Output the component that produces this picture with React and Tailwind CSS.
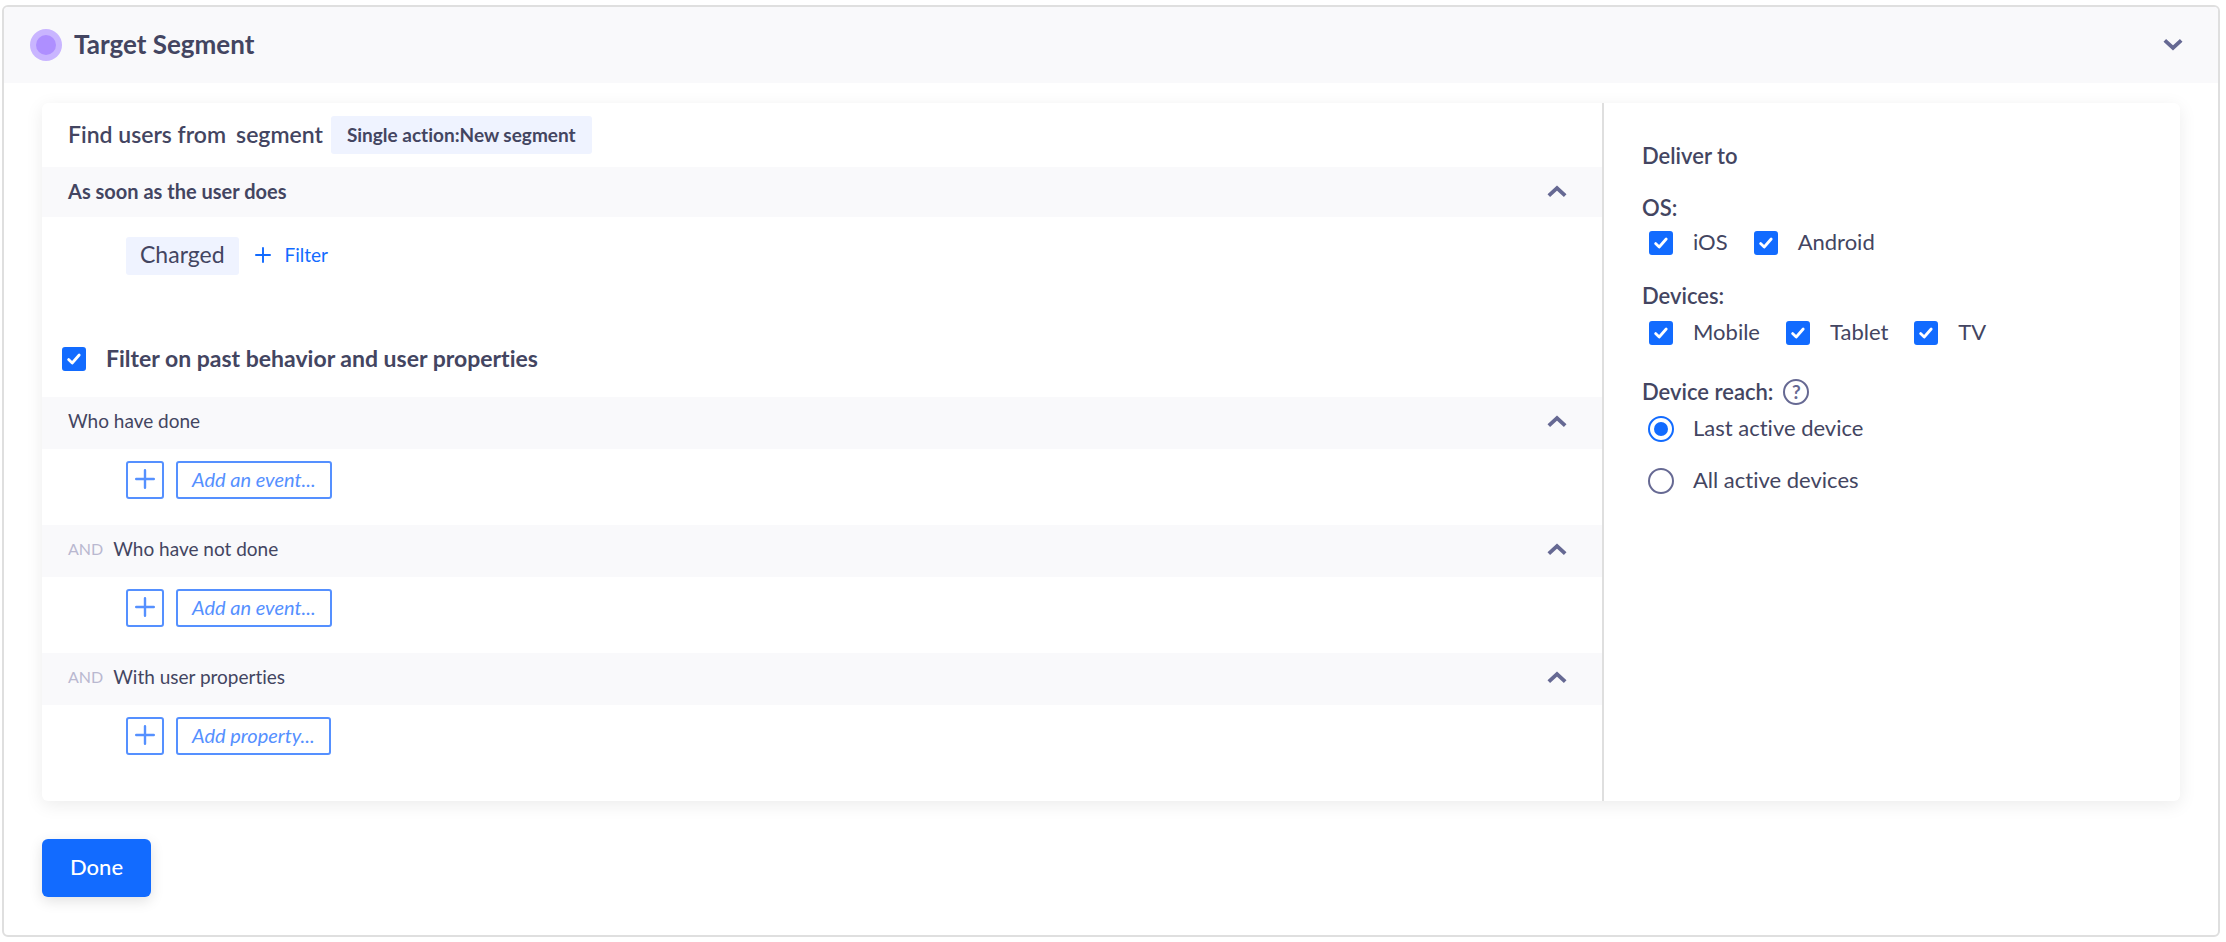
import React, { useState } from "react";

const Chevron = ({ up }) => (
  <svg
    viewBox="0 0 20 12"
    className={`w-5 h-3 text-[#666993] ${up ? "rotate-180" : ""}`}
    fill="none"
    stroke="currentColor"
    strokeWidth="3.8"
    strokeLinejoin="miter"
  >
    <path d="M1.8 1.4 L10 9 L18.2 1.4" />
  </svg>
);

const Plus = ({ className }) => (
  <svg viewBox="0 0 20 20" className={className} fill="none" stroke="currentColor" strokeWidth="2.4" strokeLinecap="round">
    <path d="M10 1.2V18.8M1.2 10H18.8" />
  </svg>
);

const Checkbox = ({ label, className = "", textClass = "" }) => (
  <label className={`flex items-center h-[26px] cursor-pointer ${className}`}>
    <span className="relative flex w-6 h-6">
      <input
        type="checkbox"
        defaultChecked
        className="peer appearance-none w-6 h-6 rounded-[3px] border-2 border-[#666993] checked:border-[#126bff] checked:bg-[#126bff]"
      />
      <svg
        viewBox="0 0 24 24"
        className="absolute inset-0 w-6 h-6 text-white pointer-events-none opacity-0 peer-checked:opacity-100"
        fill="none"
        stroke="currentColor"
        strokeWidth="2.8"
        strokeLinecap="round"
        strokeLinejoin="round"
      >
        <path d="M6.6 12.6L10.2 16L17.2 8" />
      </svg>
    </span>
    <span className={`ml-5 pb-[2px] ${textClass}`}>{label}</span>
  </label>
);

const Radio = ({ label, value, selected, onSelect }) => (
  <label className="flex items-center h-[26px] cursor-pointer">
    <span className="relative flex w-[26px] h-[26px]">
      <input
        type="radio"
        name="reach"
        value={value}
        checked={selected === value}
        onChange={() => onSelect(value)}
        className="peer appearance-none w-[26px] h-[26px] rounded-full border-2 border-[#666993] checked:border-[#126bff]"
      />
      <span className="absolute inset-0 m-auto w-[14px] h-[14px] rounded-full bg-[#126bff] opacity-0 peer-checked:opacity-100" />
    </span>
    <span className="ml-[19px] pb-[2px]">{label}</span>
  </label>
);

const Section = ({ title, and, action }) => {
  const [open, setOpen] = useState(true);

  return (
    <section>
      <div className="h-[52px] pl-[26px] pr-[35px] pb-1 flex items-center bg-[#f9f9fb] text-[19px]">
        {and && <span className="mr-[10px] text-[16px] text-[#b9b8d0]">AND</span>}
        <h3>{title}</h3>
        <button className="ml-auto" aria-label={title} onClick={() => setOpen(!open)}>
          <Chevron up={open} />
        </button>
      </div>
      {open && (
        <div className="flex gap-3 pt-3 pb-[26px] pl-[84px] text-[#5590ff]">
          <button className="w-[38px] h-[38px] pb-[2px] flex items-center justify-center rounded-[3px] border-2" aria-label="Add">
            <Plus className="w-5 h-5" />
          </button>
          <button className="h-[38px] px-[14px] pb-[2px] rounded-[3px] border-2 text-[20px] italic">{action}</button>
        </div>
      )}
    </section>
  );
};

export default function App() {
  const [reach, setReach] = useState("last");

  return (
    <div className="pl-[2px] pr-[6px] py-[5px] bg-white font-['Lato','Open_Sans',sans-serif] [font-variant-ligatures:none] text-[22px] leading-[26px] text-[#434561]">
      <div className="rounded-md border-2 border-[#dfdfdf] overflow-hidden">
        <header className="h-[76px] pl-[26px] pr-[35px] flex items-center bg-[#f9f9fb]">
          <span className="w-8 h-8 flex items-center justify-center rounded-full bg-[#c9b5ff]">
            <span className="w-5 h-5 rounded-full bg-[#ae8fff]" />
          </span>
          <h1 className="ml-3 pb-[2px] text-[26px] font-bold">Target Segment</h1>
          <button className="ml-auto" aria-label="Collapse">
            <Chevron />
          </button>
        </header>

        <main className="px-[38px] pt-5 pb-[38px]">
          <div className="flex rounded-md overflow-hidden bg-white shadow-[0_4px_18px_rgba(0,0,0,0.08)]">
            <div className="flex-1 pb-5">
              <div className="h-16 px-[26px] flex items-center font-semibold">
                <span className="pb-[2px] text-[23px]">Find users from</span>
                <span className="ml-[10px] pb-[2px] text-[23px]">segment</span>
                <span className="ml-2 h-[38px] px-4 flex items-center rounded-[3px] bg-[#eff3ff] text-[19px] font-bold">
                  Single action:New segment
                </span>
              </div>
              <div className="h-[50px] pl-[26px] pr-[35px] pb-[2px] flex items-center bg-[#f9f9fb]">
                <h2 className="text-[20px] font-bold">As soon as the user does</h2>
                <button className="ml-auto" aria-label="Toggle trigger">
                  <Chevron up />
                </button>
              </div>
              <div className="pl-[84px] pt-5 flex items-center">
                <span className="h-[38px] px-[14px] pb-1 flex items-center rounded-[3px] bg-[#eff3ff] text-[23px]">
                  Charged
                </span>
                <button className="ml-4 pb-[2px] flex items-center text-[19px] text-[#126bff]">
                  <Plus className="w-4 h-4" />
                  <span className="ml-[14px]">Filter</span>
                </button>
              </div>
              <Checkbox
                label="Filter on past behavior and user properties"
                className="mt-[71px] mb-[25px] ml-5"
                textClass="text-[23px] font-bold"
              />
              <Section title="Who have done" action="Add an event..." />
              <Section title="Who have not done" action="Add an event..." and />
              <Section title="With user properties" action="Add property..." and />
            </div>

            <aside className="w-[578px] pl-[38px] pt-10 border-l-2 border-[#dfdfdf]">
              <h2 className="font-semibold">Deliver to</h2>
              <h3 className="mt-[26px] font-semibold">OS:</h3>
              <div className="mt-[9px] pl-[7px] flex gap-[26px]">
                <Checkbox label="iOS" />
                <Checkbox label="Android" />
              </div>
              <h3 className="mt-[27px] font-semibold">Devices:</h3>
              <div className="mt-[11px] pl-[7px] flex gap-[26px]">
                <Checkbox label="Mobile" />
                <Checkbox label="Tablet" />
                <Checkbox label="TV" />
              </div>
              <div className="mt-[33px] flex items-center gap-[10px]">
                <h3 className="font-semibold">Device reach:</h3>
                <button
                  className="w-[26px] h-[26px] flex items-center justify-center rounded-full border-2 border-[#666993] text-[19px] font-bold text-[#666993]"
                  aria-label="Device reach help"
                >
                  ?
                </button>
              </div>
              <div className="mt-[11px] pl-[6px] flex flex-col gap-[26px]">
                <Radio label="Last active device" value="last" selected={reach} onSelect={setReach} />
                <Radio label="All active devices" value="all" selected={reach} onSelect={setReach} />
              </div>
            </aside>
          </div>

          <button className="mt-[38px] h-[58px] px-7 pb-[2px] block rounded-md bg-[#126bff] text-white font-medium shadow-[0_4px_14px_rgba(0,0,0,0.12)]">
            Done
          </button>
        </main>
      </div>
    </div>
  );
}
